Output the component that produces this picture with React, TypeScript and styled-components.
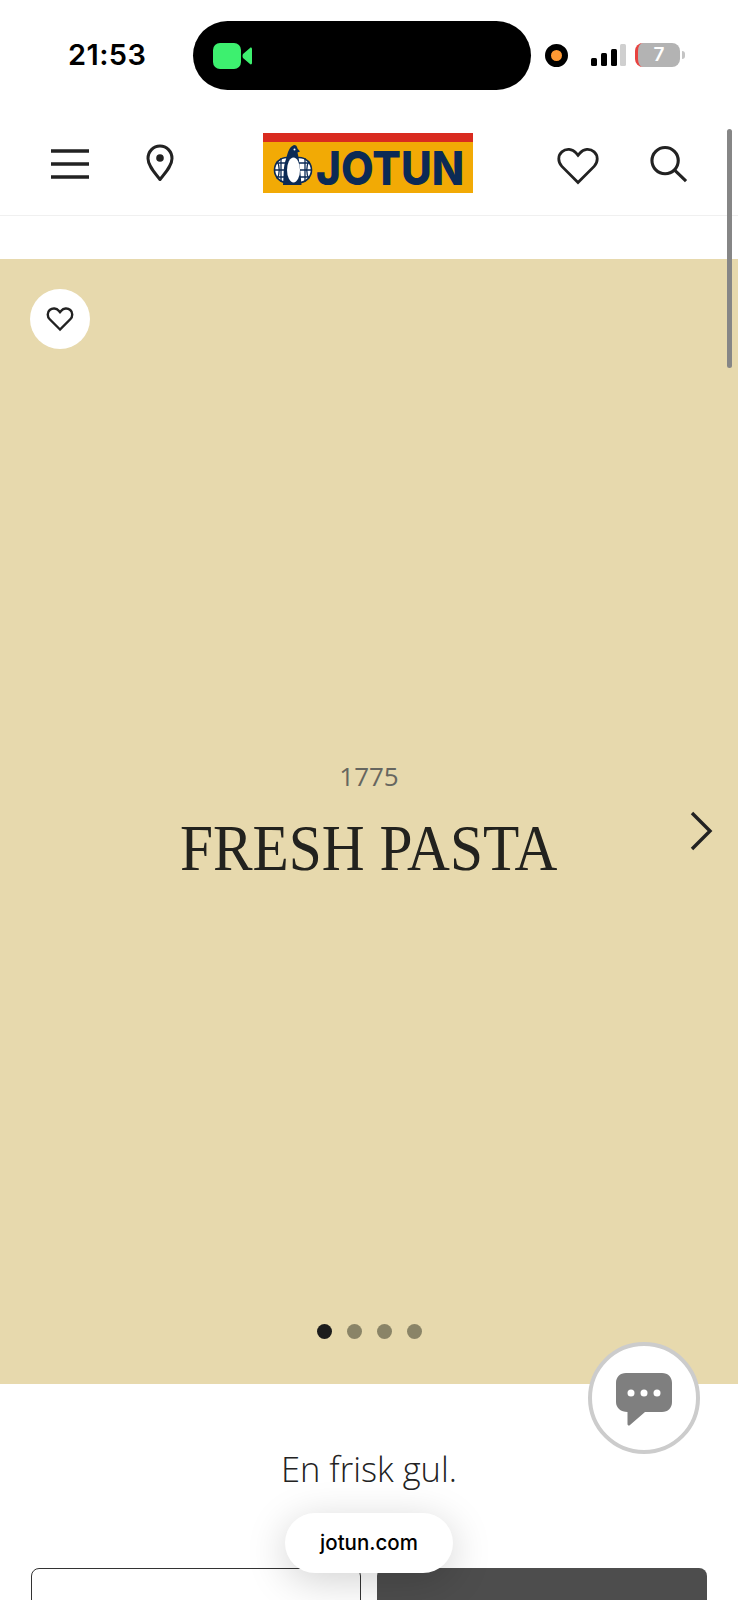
import React from 'react';
import styled, { createGlobalStyle } from 'styled-components';

const GlobalStyle = createGlobalStyle`
  html, body {
    margin: 0;
    padding: 0;
    background: #ffffff;
  }
  * {
    box-sizing: border-box;
  }
`;

const DOTS = [true, false, false, false];

const App: React.FC = () => {
  return (
    <Page>
      <GlobalStyle />
      <StatusBar>
        <Clock>21:53</Clock>
        <Island>
          <CameraIcon />
        </Island>
        <RecordDot />
        <SignalIcon />
        <Battery>
          <BatteryBody>7</BatteryBody>
          <BatteryCap />
        </Battery>
      </StatusBar>

      <Header>
        <HeaderLeft>
          <MenuIcon />
          <PinIcon />
        </HeaderLeft>
        <Logo>
          <LogoBand />
          <LogoBody>
            <PenguinMark />
            <LogoText>JOTUN</LogoText>
          </LogoBody>
        </Logo>
        <HeaderRight>
          <HeartIcon size={44} strokeWidth={2.8} />
          <SearchIcon />
        </HeaderRight>
      </Header>

      <Swatch>
        <FavButton>
          <HeartIcon size={28} strokeWidth={2.4} />
        </FavButton>
        <SwatchCode>1775</SwatchCode>
        <SwatchName>FRESH PASTA</SwatchName>
        <NextButton>
          <svg width="24" height="40" viewBox="0 0 24 40" fill="none">
            <path d="M3 2l18 18L3 38" stroke="#222222" strokeWidth="3.4" />
          </svg>
        </NextButton>
        <DotRow>
          {DOTS.map((active, index) => (
            <Dot key={index} $active={active} />
          ))}
        </DotRow>
      </Swatch>

      <Description>En frisk gul.</Description>

      <Buttons>
        <OutlineButton />
        <FilledButton />
      </Buttons>

      <Scrollbar />
      <ChatButton>
        <svg width="56" height="53" viewBox="0 0 56 53">
          <path
            d="M10 0h36c6 0 10 4 10 10v19c0 6-4 10-10 10H29L14 52c-1 1-2.500 .5-2.500-1V39C5 39 0 35 0 29V10C0 4 4 0 10 0z"
            fill="#7f7f7f"
          />
          <circle cx="15" cy="20" r="3.500" fill="#ffffff" />
          <circle cx="28" cy="20" r="3.500" fill="#ffffff" />
          <circle cx="41" cy="20" r="3.500" fill="#ffffff" />
        </svg>
      </ChatButton>
      <UrlPill>jotun.com</UrlPill>
    </Page>
  );
};

export default App;

const CameraIcon = () => (
  <svg width="39" height="26" viewBox="0 0 39 26">
    <rect width="28" height="26" rx="7" fill="#3df06f" />
    <path d="M30 11l7-6c1-1 2 0 2 1v14c0 1-1 2-2 1l-7-6c-.6-1.400-.6-2.600 0-4z" fill="#3df06f" />
  </svg>
);

const SignalIcon = () => (
  <SignalSvg width="35" height="23" viewBox="0 0 35 23">
    <rect x="0" y="14" width="6" height="8" rx="1.500" fill="#000000" />
    <rect x="10" y="9" width="6" height="13" rx="1.500" fill="#000000" />
    <rect x="20" y="5" width="6" height="17" rx="1.500" fill="#000000" />
    <rect x="29" y="0" width="6" height="22" rx="1.500" fill="#cfcfcf" />
  </SignalSvg>
);

const MenuIcon = () => (
  <MenuSvg width="38" height="32" viewBox="0 0 38 32">
    <path d="M0 3h38M0 16h38M0 29h38" stroke="#222222" strokeWidth="3.400" />
  </MenuSvg>
);

const PinIcon = () => (
  <svg width="28" height="38" viewBox="0 0 28 38" fill="none">
    <path
      d="M14 35.500C9 29 2 22 2 14.500 2 7.500 7.300 2 14 2s12 5.500 12 12.500C26 22 19 29 14 35.500z"
      stroke="#222222"
      strokeWidth="3"
      strokeLinejoin="round"
    />
    <circle cx="14" cy="14" r="3.800" fill="#222222" />
  </svg>
);

const HeartIcon = ({ size, strokeWidth }: { size: number; strokeWidth: number }) => (
  <svg width={size} height={size} viewBox="0 0 24 24" fill="none">
    <path
      d="M12 21L3.200 12.200C.9 9.800 1 6.200 3.200 4.300c2.300-2 5.800-1.700 7.700.6L12 6.200l1.100-1.300c1.900-2.300 5.400-2.600 7.700-.6 2.200 1.900 2.300 5.500 0 7.900L12 21z"
      stroke="#222222"
      strokeWidth={strokeWidth * (24 / size)}
      strokeLinejoin="miter"
    />
  </svg>
);

const SearchIcon = () => (
  <SearchSvg width="38" height="38" viewBox="0 0 39 38" fill="none">
    <circle cx="15.500" cy="15.500" r="13.500" stroke="#222222" strokeWidth="3.200" />
    <path d="M25 25l12 11.500" stroke="#222222" strokeWidth="3.200" />
  </SearchSvg>
);

const PenguinMark = () => (
  <MarkSvg width="40" height="40" viewBox="0 0 40 40">
    <circle cx="14" cy="25" r="12.500" fill="#ffffff" stroke="#0b2a55" strokeWidth="1.600" />
    <circle cx="26" cy="25" r="12.500" fill="#ffffff" stroke="#0b2a55" strokeWidth="1.600" />
    <path
      d="M1 25h38M8 13v24M32 13v24M3 18h34M3 32h34M4 16c3 5 3 13 0 18M36 16c-3 5-3 13 0 18"
      stroke="#0b2a55"
      strokeWidth="1.300"
      fill="none"
    />
    <path
      d="M10 40c1-10 0-18 3-26 2-7 3-12 8-14 2 0 3 1 3.500 3.500l2.500 3-2.500 1c2 8 3 20 4 32.500H10z"
      fill="#0b2a55"
    />
    <ellipse cx="20.500" cy="25" rx="6.500" ry="12.500" fill="#ffffff" />
    <circle cx="21.500" cy="4.500" r="1" fill="#ffffff" />
  </MarkSvg>
);

const Page = styled.div`
  position: relative;
  width: 738px;
  height: 1600px;
  overflow: hidden;
  background: #ffffff;
  display: flex;
  flex-direction: column;

  & > * {
    flex-shrink: 0;
  }
`;

const StatusBar = styled.div`
  height: 112px;
  padding: 21px 0 0 68px;
  display: flex;
  align-items: flex-start;
`;

const Clock = styled.span`
  width: 125px;
  height: 69px;
  font-family: 'Inter', sans-serif;
  font-weight: 600;
  font-size: 29px;
  line-height: 68px;
  letter-spacing: 0.4px;
  color: #000000;
`;

const Island = styled.div`
  width: 338px;
  height: 69px;
  padding-left: 20px;
  border-radius: 35px;
  background: #000000;
  display: flex;
  align-items: center;
`;

const RecordDot = styled.div`
  margin: 23px 0 0 14px;
  width: 23px;
  height: 23px;
  border: 6px solid #000000;
  border-radius: 50%;
  background: #ff9933;
`;

const SignalSvg = styled.svg`
  margin: 23px 0 0 23px;
`;

const Battery = styled.div`
  margin: 22px 0 0 9px;
  display: flex;
  align-items: center;
  gap: 2px;
`;

const BatteryBody = styled.div`
  width: 45px;
  height: 24px;
  border-radius: 8px;
  border-left: 3px solid #e8423f;
  background: #b3b3b3;
  font-family: 'Inter', sans-serif;
  font-weight: 600;
  font-size: 19px;
  line-height: 24px;
  text-align: center;
  color: #ffffff;
`;

const BatteryCap = styled.div`
  width: 3px;
  height: 8px;
  border-radius: 0 3px 3px 0;
  background: #c4c4c4;
`;

const Header = styled.header`
  height: 104px;
  padding: 21px 50px 0 51px;
  border-bottom: 1px solid #f0f0f0;
  display: flex;
  align-items: flex-start;
  justify-content: space-between;
`;

const HeaderLeft = styled.div`
  width: 128px;
  padding-top: 11px;
  display: flex;
  align-items: center;
  gap: 57px;
`;

const MenuSvg = styled.svg`
  flex-shrink: 0;
  margin-top: 2px;
`;

const HeaderRight = styled.div`
  padding-top: 11px;
  display: flex;
  align-items: center;
  gap: 50px;
`;

const SearchSvg = styled.svg`
  margin-bottom: 5px;
`;

const Logo = styled.div`
  width: 210px;
  height: 60px;
  display: flex;
  flex-direction: column;
`;

const LogoBand = styled.div`
  height: 9px;
  background: #d92b1f;
`;

const LogoBody = styled.div`
  flex: 1;
  padding-left: 10px;
  background: #f2aa05;
  display: flex;
  align-items: center;
  gap: 3px;
`;

const MarkSvg = styled.svg`
  flex-shrink: 0;
  margin-top: -5px;
`;

const LogoText = styled.span`
  flex-shrink: 0;
  margin-right: -16px;
  font-family: 'Inter', sans-serif;
  font-weight: 800;
  font-size: 47px;
  line-height: 51px;
  color: #0b2a55;
  transform: scaleX(0.9);
  transform-origin: left center;
`;

const Swatch = styled.section`
  position: relative;
  margin-top: 43px;
  height: 1125px;
  padding-top: 500px;
  background: #e7d9ad;
  display: flex;
  flex-direction: column;
  align-items: center;
`;

const FavButton = styled.div`
  position: absolute;
  top: 30px;
  left: 30px;
  width: 60px;
  height: 60px;
  border-radius: 50%;
  background: #ffffff;
  display: flex;
  align-items: center;
  justify-content: center;
`;

const SwatchCode = styled.span`
  font-family: 'Open Sans', sans-serif;
  font-size: 26px;
  line-height: 34px;
  color: #66665f;
`;

const SwatchName = styled.h1`
  margin: 19px 0 0;
  font-family: 'Liberation Serif', serif;
  font-weight: 400;
  font-size: 65px;
  line-height: 72px;
  color: #22221e;
  transform: scaleX(0.913);
`;

const NextButton = styled.div`
  position: absolute;
  top: 552px;
  right: 25px;
  display: flex;
`;

const DotRow = styled.div`
  position: absolute;
  bottom: 45px;
  left: 317px;
  display: flex;
  gap: 15px;
`;

const Dot = styled.span<{ $active: boolean }>`
  width: 15px;
  height: 15px;
  border-radius: 50%;
  background: ${({ $active }) => ($active ? '#1c1c1c' : '#8a8467')};
`;

const Description = styled.p`
  margin: 63px 0 0;
  font-family: 'Open Sans', sans-serif;
  font-weight: 300;
  font-size: 34.5px;
  line-height: 44px;
  text-align: center;
  color: #222222;
`;

const Buttons = styled.div`
  margin-top: 77px;
  padding: 0 31px;
  display: grid;
  grid-template-columns: 1fr 1fr;
  gap: 16px;
`;

const OutlineButton = styled.div`
  height: 80px;
  border: 1.500px solid #333333;
  border-radius: 8px;
  background: #ffffff;
`;

const FilledButton = styled.div`
  height: 80px;
  border-radius: 8px;
  background: #4d4d4d;
`;

const Scrollbar = styled.div`
  position: absolute;
  top: 129px;
  left: 727px;
  width: 5px;
  height: 239px;
  border-radius: 3px;
  background: #868686;
`;

const ChatButton = styled.div`
  position: absolute;
  top: 1342px;
  left: 588px;
  width: 112px;
  height: 112px;
  border: 4px solid #cccccc;
  border-radius: 50%;
  background: #ffffff;
  display: flex;
  align-items: center;
  justify-content: center;
  padding-top: 2px;
`;

const UrlPill = styled.div`
  position: absolute;
  top: 1513px;
  left: 285px;
  width: 168px;
  height: 60px;
  border-radius: 30px;
  background: #ffffff;
  box-shadow: 0 8px 40px rgba(0, 0, 0, 0.18);
  font-family: 'Inter', sans-serif;
  font-weight: 500;
  font-size: 20.5px;
  line-height: 60px;
  text-align: center;
  color: #000000;
`;
